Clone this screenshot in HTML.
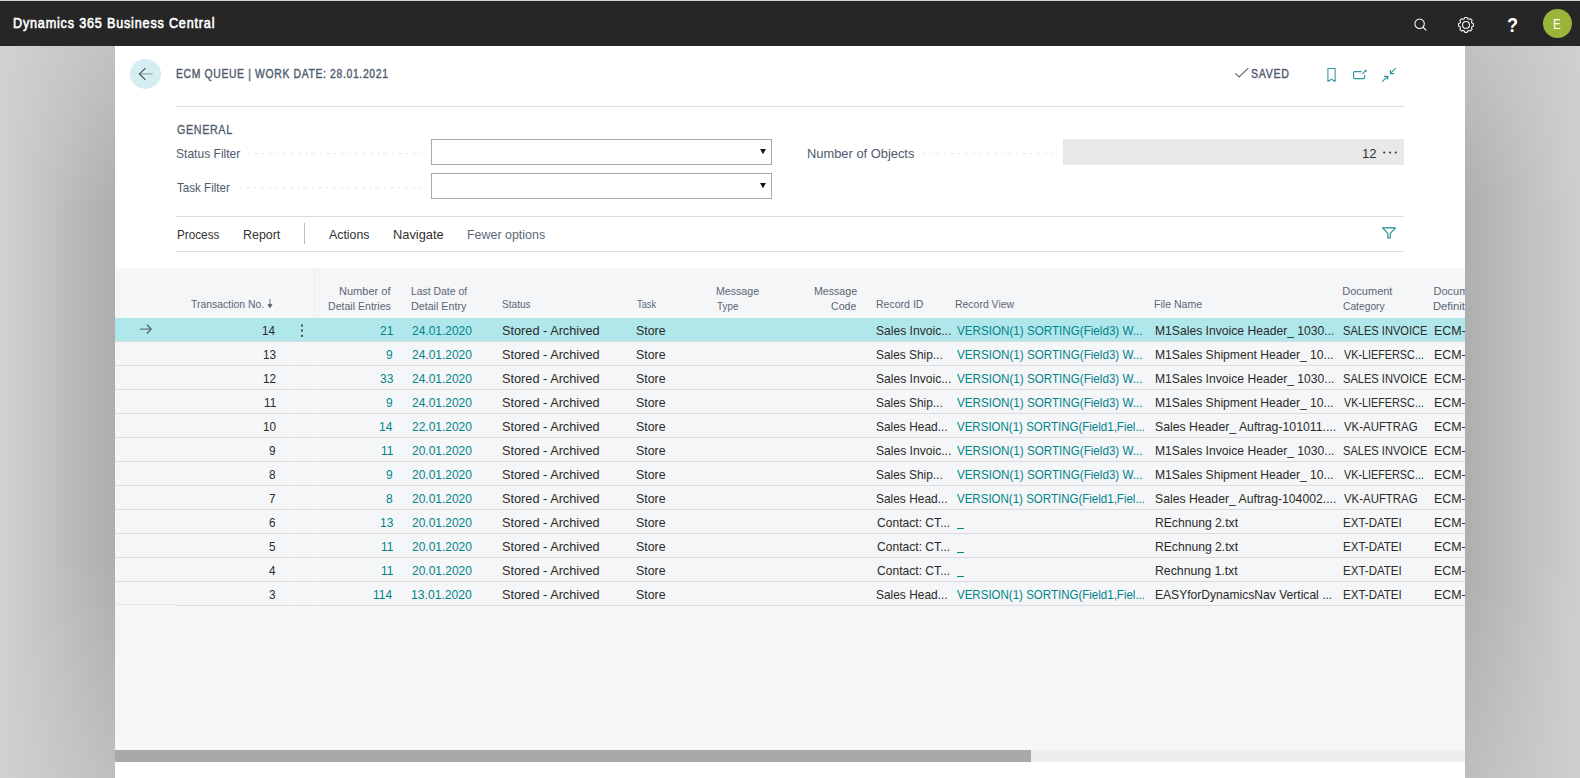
<!DOCTYPE html>
<html><head><meta charset="utf-8"><title>ECM Queue</title>
<style>html,body{margin:0;padding:0;width:1580px;height:778px;overflow:hidden;background:#fff;font-family:'Liberation Sans', sans-serif}</style>
</head><body>
<div style="position:relative;width:1580px;height:778px;overflow:hidden">
<div style='position:absolute;left:0px;top:0px;width:1580px;height:1px;background:#d4d4d4;'></div>
<div style='position:absolute;left:0px;top:1px;width:1580px;height:45px;background:#262626;'></div>
<div style='position:absolute;left:0px;top:46px;width:115px;height:732px;background:linear-gradient(to bottom,rgba(210,210,210,0.55) 0px,rgba(210,210,210,0) 160px,rgba(210,210,210,0) 520px,rgba(210,210,210,0.45) 732px),linear-gradient(to right,#d1d1d1,#aeaeae);'></div>
<div style='position:absolute;left:1465px;top:46px;width:115px;height:732px;background:linear-gradient(to bottom,rgba(208,208,208,0.55) 0px,rgba(208,208,208,0) 160px,rgba(208,208,208,0) 520px,rgba(208,208,208,0.45) 732px),linear-gradient(to right,#aeaeae,#cfcfcf);'></div>
<div style='position:absolute;left:115px;top:46px;width:1350px;height:732px;background:#ffffff;'></div>
<div style='position:absolute;left:1543px;top:9px;width:29px;height:29px;border-radius:50%;background:#9bb43a'></div>
<div style='position:absolute;left:130px;top:59px;width:31px;height:30px;border-radius:50%;background:#d6eef1'></div>
<div style='position:absolute;left:176px;top:106px;width:1228px;height:1px;background:#d9dde3;'></div>
<div style='position:absolute;left:431px;top:139px;width:339px;height:24px;border:1px solid #a8a8a8;background:#fff'></div>
<div style='position:absolute;left:431px;top:173px;width:339px;height:24px;border:1px solid #a8a8a8;background:#fff'></div>
<div style='position:absolute;left:1063px;top:139px;width:341px;height:26px;background:#e7e8ea;'></div>
<svg style='position:absolute;left:1382px;top:150px' width='16' height='5' viewBox='0 0 16 5'>
<circle cx='2.2' cy='2.5' r='1.05' fill='#323130'/><circle cx='8' cy='2.5' r='1.05' fill='#323130'/><circle cx='13.8' cy='2.5' r='1.05' fill='#323130'/></svg>
<div style='position:absolute;left:176px;top:216px;width:1228px;height:1px;background:#d9dde3;'></div>
<div style='position:absolute;left:176px;top:251px;width:1228px;height:1px;background:#d9dde3;'></div>
<div style='position:absolute;left:304px;top:223px;width:1px;height:21px;background:#b8bcc2;'></div>
<div style='position:absolute;left:115px;top:268px;width:1350px;height:482px;background:#f5f6f7;'></div>
<div style='position:absolute;left:314px;top:268px;width:1px;height:50px;background:#eeeff1;'></div>
<div style='position:absolute;left:115px;top:318px;width:1350px;height:23px;background:#b0e7ea;'></div>
<div style='position:absolute;left:115px;top:341px;width:174px;height:1px;background:#dadcdf;'></div>
<div style='position:absolute;left:290px;top:341px;width:24px;height:1px;background:#dadcdf;'></div>
<div style='position:absolute;left:315px;top:341px;width:1150px;height:1px;background:#dadcdf;'></div>
<div style='position:absolute;left:115px;top:365px;width:174px;height:1px;background:#dadcdf;'></div>
<div style='position:absolute;left:290px;top:365px;width:24px;height:1px;background:#dadcdf;'></div>
<div style='position:absolute;left:315px;top:365px;width:1150px;height:1px;background:#dadcdf;'></div>
<div style='position:absolute;left:115px;top:389px;width:174px;height:1px;background:#dadcdf;'></div>
<div style='position:absolute;left:290px;top:389px;width:24px;height:1px;background:#dadcdf;'></div>
<div style='position:absolute;left:315px;top:389px;width:1150px;height:1px;background:#dadcdf;'></div>
<div style='position:absolute;left:115px;top:413px;width:174px;height:1px;background:#dadcdf;'></div>
<div style='position:absolute;left:290px;top:413px;width:24px;height:1px;background:#dadcdf;'></div>
<div style='position:absolute;left:315px;top:413px;width:1150px;height:1px;background:#dadcdf;'></div>
<div style='position:absolute;left:115px;top:437px;width:174px;height:1px;background:#dadcdf;'></div>
<div style='position:absolute;left:290px;top:437px;width:24px;height:1px;background:#dadcdf;'></div>
<div style='position:absolute;left:315px;top:437px;width:1150px;height:1px;background:#dadcdf;'></div>
<div style='position:absolute;left:115px;top:461px;width:174px;height:1px;background:#dadcdf;'></div>
<div style='position:absolute;left:290px;top:461px;width:24px;height:1px;background:#dadcdf;'></div>
<div style='position:absolute;left:315px;top:461px;width:1150px;height:1px;background:#dadcdf;'></div>
<div style='position:absolute;left:115px;top:485px;width:174px;height:1px;background:#dadcdf;'></div>
<div style='position:absolute;left:290px;top:485px;width:24px;height:1px;background:#dadcdf;'></div>
<div style='position:absolute;left:315px;top:485px;width:1150px;height:1px;background:#dadcdf;'></div>
<div style='position:absolute;left:115px;top:509px;width:174px;height:1px;background:#dadcdf;'></div>
<div style='position:absolute;left:290px;top:509px;width:24px;height:1px;background:#dadcdf;'></div>
<div style='position:absolute;left:315px;top:509px;width:1150px;height:1px;background:#dadcdf;'></div>
<div style='position:absolute;left:115px;top:533px;width:174px;height:1px;background:#dadcdf;'></div>
<div style='position:absolute;left:290px;top:533px;width:24px;height:1px;background:#dadcdf;'></div>
<div style='position:absolute;left:315px;top:533px;width:1150px;height:1px;background:#dadcdf;'></div>
<div style='position:absolute;left:957px;top:528px;width:7px;height:1.2px;background:#00838c;'></div>
<div style='position:absolute;left:115px;top:557px;width:174px;height:1px;background:#dadcdf;'></div>
<div style='position:absolute;left:290px;top:557px;width:24px;height:1px;background:#dadcdf;'></div>
<div style='position:absolute;left:315px;top:557px;width:1150px;height:1px;background:#dadcdf;'></div>
<div style='position:absolute;left:957px;top:552px;width:7px;height:1.2px;background:#00838c;'></div>
<div style='position:absolute;left:115px;top:581px;width:174px;height:1px;background:#dadcdf;'></div>
<div style='position:absolute;left:290px;top:581px;width:24px;height:1px;background:#dadcdf;'></div>
<div style='position:absolute;left:315px;top:581px;width:1150px;height:1px;background:#dadcdf;'></div>
<div style='position:absolute;left:957px;top:576px;width:7px;height:1.2px;background:#00838c;'></div>
<div style='position:absolute;left:115px;top:604px;width:61px;height:1px;background:#e4e6e9;'></div>
<div style='position:absolute;left:176px;top:605px;width:113px;height:1px;background:#dadcdf;'></div>
<div style='position:absolute;left:290px;top:605px;width:24px;height:1px;background:#dadcdf;'></div>
<div style='position:absolute;left:315px;top:605px;width:1150px;height:1px;background:#dadcdf;'></div>
<div style='position:absolute;left:115px;top:750px;width:916px;height:12px;background:#a9a9a9;'></div>
<div style='position:absolute;left:1031px;top:750px;width:434px;height:12px;background:#eeeeee;'></div>
<span style="position:absolute;left:13.10px;top:16.15px;font-family:'Liberation Sans', sans-serif;font-size:14px;line-height:1;color:#ffffff;font-weight:normal;white-space:nowrap;transform-origin:0 0;transform:scaleX(0.9009);letter-spacing:0.9px;-webkit-text-stroke:0.6px #ffffff;">Dynamics 365 Business Central</span>
<span style="position:absolute;left:1507.10px;top:15.37px;font-family:'Liberation Sans', sans-serif;font-size:20px;line-height:1;color:#ffffff;font-weight:bold;white-space:nowrap;transform-origin:0 0;transform:scaleX(0.9000);">?</span>
<span style="position:absolute;left:1553.44px;top:15.88px;font-family:'Liberation Sans', sans-serif;font-size:15.5px;line-height:1;color:#ffffff;font-weight:normal;white-space:nowrap;transform-origin:0 0;transform:scaleX(0.7556);">E</span>
<span style="position:absolute;left:176.48px;top:68.33px;font-family:'Liberation Sans', sans-serif;font-size:12.6px;line-height:1;color:#4f5b6c;font-weight:normal;white-space:nowrap;transform-origin:0 0;transform:scaleX(0.8230);letter-spacing:0.8px;-webkit-text-stroke:0.4px #4f5b6c;">ECM QUEUE | WORK DATE: 28.01.2021</span>
<span style="position:absolute;left:1251.30px;top:68.33px;font-family:'Liberation Sans', sans-serif;font-size:12.6px;line-height:1;color:#4f5b6c;font-weight:normal;white-space:nowrap;transform-origin:0 0;transform:scaleX(0.8444);letter-spacing:0.8px;-webkit-text-stroke:0.4px #4f5b6c;">SAVED</span>
<span style="position:absolute;left:177.00px;top:123.84px;font-family:'Liberation Sans', sans-serif;font-size:12px;line-height:1;color:#4f5b6c;font-weight:normal;white-space:nowrap;transform-origin:0 0;transform:scaleX(0.8952);letter-spacing:0.7px;-webkit-text-stroke:0.3px #4f5b6c;">GENERAL</span>
<span style="position:absolute;left:176.07px;top:147.00px;font-family:'Liberation Sans', sans-serif;font-size:13px;line-height:1;color:#4f5b6c;font-weight:normal;white-space:nowrap;transform-origin:0 0;transform:scaleX(0.9275);">Status Filter</span>
<span style="position:absolute;left:177.00px;top:181.00px;font-family:'Liberation Sans', sans-serif;font-size:13px;line-height:1;color:#4f5b6c;font-weight:normal;white-space:nowrap;transform-origin:0 0;transform:scaleX(0.8917);">Task Filter</span>
<span style="position:absolute;left:807.01px;top:147.00px;font-family:'Liberation Sans', sans-serif;font-size:13px;line-height:1;color:#4f5b6c;font-weight:normal;white-space:nowrap;transform-origin:0 0;transform:scaleX(0.9907);">Number of Objects</span>
<span style="position:absolute;left:1362.00px;top:147.00px;font-family:'Liberation Sans', sans-serif;font-size:13px;line-height:1;color:#323130;font-weight:normal;white-space:nowrap;transform-origin:0 0;">12</span>
<span style="position:absolute;left:176.60px;top:227.60px;font-family:'Liberation Sans', sans-serif;font-size:13px;line-height:1;color:#323130;font-weight:normal;white-space:nowrap;transform-origin:0 0;transform:scaleX(0.9022);">Process</span>
<span style="position:absolute;left:243.04px;top:227.60px;font-family:'Liberation Sans', sans-serif;font-size:13px;line-height:1;color:#323130;font-weight:normal;white-space:nowrap;transform-origin:0 0;transform:scaleX(0.9553);">Report</span>
<span style="position:absolute;left:328.70px;top:227.60px;font-family:'Liberation Sans', sans-serif;font-size:13px;line-height:1;color:#323130;font-weight:normal;white-space:nowrap;transform-origin:0 0;transform:scaleX(0.9488);">Actions</span>
<span style="position:absolute;left:393.01px;top:227.60px;font-family:'Liberation Sans', sans-serif;font-size:13px;line-height:1;color:#323130;font-weight:normal;white-space:nowrap;transform-origin:0 0;transform:scaleX(0.9860);">Navigate</span>
<span style="position:absolute;left:467.24px;top:227.60px;font-family:'Liberation Sans', sans-serif;font-size:13px;line-height:1;color:#5a6778;font-weight:normal;white-space:nowrap;transform-origin:0 0;transform:scaleX(0.9568);">Fewer options</span>
<span style="position:absolute;left:190.80px;top:299.19px;font-family:'Liberation Sans', sans-serif;font-size:11px;line-height:1;color:#5a6676;font-weight:normal;white-space:nowrap;transform-origin:0 0;transform:scaleX(0.9481);">Transaction No.</span>
<span style="position:absolute;left:338.60px;top:285.69px;font-family:'Liberation Sans', sans-serif;font-size:11px;line-height:1;color:#5a6676;font-weight:normal;white-space:nowrap;transform-origin:0 0;transform:scaleX(1.0039);">Number of</span>
<span style="position:absolute;left:328.34px;top:300.69px;font-family:'Liberation Sans', sans-serif;font-size:11px;line-height:1;color:#5a6676;font-weight:normal;white-space:nowrap;transform-origin:0 0;transform:scaleX(0.9609);">Detail Entries</span>
<span style="position:absolute;left:410.75px;top:285.69px;font-family:'Liberation Sans', sans-serif;font-size:11px;line-height:1;color:#5a6676;font-weight:normal;white-space:nowrap;transform-origin:0 0;transform:scaleX(0.9458);">Last Date of</span>
<span style="position:absolute;left:410.73px;top:300.69px;font-family:'Liberation Sans', sans-serif;font-size:11px;line-height:1;color:#5a6676;font-weight:normal;white-space:nowrap;transform-origin:0 0;transform:scaleX(0.9732);">Detail Entry</span>
<span style="position:absolute;left:502.30px;top:299.19px;font-family:'Liberation Sans', sans-serif;font-size:11px;line-height:1;color:#5a6676;font-weight:normal;white-space:nowrap;transform-origin:0 0;transform:scaleX(0.9194);">Status</span>
<span style="position:absolute;left:636.50px;top:299.19px;font-family:'Liberation Sans', sans-serif;font-size:11px;line-height:1;color:#5a6676;font-weight:normal;white-space:nowrap;transform-origin:0 0;transform:scaleX(0.8478);">Task</span>
<span style="position:absolute;left:715.53px;top:285.69px;font-family:'Liberation Sans', sans-serif;font-size:11px;line-height:1;color:#5a6676;font-weight:normal;white-space:nowrap;transform-origin:0 0;transform:scaleX(0.9651);">Message</span>
<span style="position:absolute;left:716.50px;top:300.69px;font-family:'Liberation Sans', sans-serif;font-size:11px;line-height:1;color:#5a6676;font-weight:normal;white-space:nowrap;transform-origin:0 0;transform:scaleX(0.8958);">Type</span>
<span style="position:absolute;left:813.53px;top:285.69px;font-family:'Liberation Sans', sans-serif;font-size:11px;line-height:1;color:#5a6676;font-weight:normal;white-space:nowrap;transform-origin:0 0;transform:scaleX(0.9651);">Message</span>
<span style="position:absolute;left:831.00px;top:300.69px;font-family:'Liberation Sans', sans-serif;font-size:11px;line-height:1;color:#5a6676;font-weight:normal;white-space:nowrap;transform-origin:0 0;transform:scaleX(0.9615);">Code</span>
<span style="position:absolute;left:875.64px;top:299.19px;font-family:'Liberation Sans', sans-serif;font-size:11px;line-height:1;color:#5a6676;font-weight:normal;white-space:nowrap;transform-origin:0 0;transform:scaleX(0.9583);">Record ID</span>
<span style="position:absolute;left:955.45px;top:299.19px;font-family:'Liberation Sans', sans-serif;font-size:11px;line-height:1;color:#5a6676;font-weight:normal;white-space:nowrap;transform-origin:0 0;transform:scaleX(0.9508);">Record View</span>
<span style="position:absolute;left:1154.34px;top:299.19px;font-family:'Liberation Sans', sans-serif;font-size:11px;line-height:1;color:#5a6676;font-weight:normal;white-space:nowrap;transform-origin:0 0;transform:scaleX(0.9592);">File Name</span>
<span style="position:absolute;left:1342.30px;top:285.69px;font-family:'Liberation Sans', sans-serif;font-size:11px;line-height:1;color:#5a6676;font-weight:normal;white-space:nowrap;transform-origin:0 0;">Document</span>
<span style="position:absolute;left:1343.30px;top:300.69px;font-family:'Liberation Sans', sans-serif;font-size:11px;line-height:1;color:#5a6676;font-weight:normal;white-space:nowrap;transform-origin:0 0;transform:scaleX(0.9333);">Category</span>
<div style='position:absolute;left:0;top:0;width:1465px;height:778px;overflow:hidden'><span style="position:absolute;left:1433.50px;top:285.69px;font-family:'Liberation Sans', sans-serif;font-size:11px;line-height:1;color:#5a6676;font-weight:normal;white-space:nowrap;transform-origin:0 0;">Document</span></div>
<div style='position:absolute;left:0;top:0;width:1465px;height:778px;overflow:hidden'><span style="position:absolute;left:1433.48px;top:300.69px;font-family:'Liberation Sans', sans-serif;font-size:11px;line-height:1;color:#5a6676;font-weight:normal;white-space:nowrap;transform-origin:0 0;transform:scaleX(1.0222);">Definition</span></div>
<span style="position:absolute;left:262.00px;top:324.00px;font-family:'Liberation Sans', sans-serif;font-size:13px;line-height:1;color:#2a2a2a;font-weight:normal;white-space:nowrap;transform-origin:0 0;transform:scaleX(0.9000);">14</span>
<span style="position:absolute;left:379.72px;top:324.00px;font-family:'Liberation Sans', sans-serif;font-size:13px;line-height:1;color:#00838c;font-weight:normal;white-space:nowrap;transform-origin:0 0;transform:scaleX(0.9200);">21</span>
<span style="position:absolute;left:411.50px;top:324.00px;font-family:'Liberation Sans', sans-serif;font-size:13px;line-height:1;color:#00838c;font-weight:normal;white-space:nowrap;transform-origin:0 0;transform:scaleX(0.9200);">24.01.2020</span>
<span style="position:absolute;left:502.02px;top:324.00px;font-family:'Liberation Sans', sans-serif;font-size:13px;line-height:1;color:#2a2a2a;font-weight:normal;white-space:nowrap;transform-origin:0 0;transform:scaleX(0.9796);">Stored - Archived</span>
<span style="position:absolute;left:635.55px;top:324.00px;font-family:'Liberation Sans', sans-serif;font-size:13px;line-height:1;color:#2a2a2a;font-weight:normal;white-space:nowrap;transform-origin:0 0;transform:scaleX(0.9500);">Store</span>
<span style="position:absolute;left:875.77px;top:324.00px;font-family:'Liberation Sans', sans-serif;font-size:13px;line-height:1;color:#2a2a2a;font-weight:normal;white-space:nowrap;transform-origin:0 0;transform:scaleX(0.9304);">Sales Invoic...</span>
<span style="position:absolute;left:956.80px;top:324.00px;font-family:'Liberation Sans', sans-serif;font-size:13px;line-height:1;color:#00838c;font-weight:normal;white-space:nowrap;transform-origin:0 0;transform:scaleX(0.8961);">VERSION(1) SORTING(Field3) W...</span>
<span style="position:absolute;left:1155.17px;top:324.00px;font-family:'Liberation Sans', sans-serif;font-size:13px;line-height:1;color:#2a2a2a;font-weight:normal;white-space:nowrap;transform-origin:0 0;transform:scaleX(0.9332);">M1Sales Invoice Header_ 1030...</span>
<span style="position:absolute;left:1343.05px;top:324.00px;font-family:'Liberation Sans', sans-serif;font-size:13px;line-height:1;color:#2a2a2a;font-weight:normal;white-space:nowrap;transform-origin:0 0;transform:scaleX(0.8531);">SALES INVOICE</span>
<div style='position:absolute;left:0;top:0;width:1465px;height:778px;overflow:hidden'><span style="position:absolute;left:1434.05px;top:324.00px;font-family:'Liberation Sans', sans-serif;font-size:13px;line-height:1;color:#2a2a2a;font-weight:normal;white-space:nowrap;transform-origin:0 0;transform:scaleX(0.9531);">ECM-</span></div>
<span style="position:absolute;left:262.90px;top:348.00px;font-family:'Liberation Sans', sans-serif;font-size:13px;line-height:1;color:#2a2a2a;font-weight:normal;white-space:nowrap;transform-origin:0 0;transform:scaleX(0.9000);">13</span>
<span style="position:absolute;left:386.16px;top:348.00px;font-family:'Liberation Sans', sans-serif;font-size:13px;line-height:1;color:#00838c;font-weight:normal;white-space:nowrap;transform-origin:0 0;transform:scaleX(0.9200);">9</span>
<span style="position:absolute;left:411.50px;top:348.00px;font-family:'Liberation Sans', sans-serif;font-size:13px;line-height:1;color:#00838c;font-weight:normal;white-space:nowrap;transform-origin:0 0;transform:scaleX(0.9200);">24.01.2020</span>
<span style="position:absolute;left:502.02px;top:348.00px;font-family:'Liberation Sans', sans-serif;font-size:13px;line-height:1;color:#2a2a2a;font-weight:normal;white-space:nowrap;transform-origin:0 0;transform:scaleX(0.9796);">Stored - Archived</span>
<span style="position:absolute;left:635.55px;top:348.00px;font-family:'Liberation Sans', sans-serif;font-size:13px;line-height:1;color:#2a2a2a;font-weight:normal;white-space:nowrap;transform-origin:0 0;transform:scaleX(0.9500);">Store</span>
<span style="position:absolute;left:875.79px;top:348.00px;font-family:'Liberation Sans', sans-serif;font-size:13px;line-height:1;color:#2a2a2a;font-weight:normal;white-space:nowrap;transform-origin:0 0;transform:scaleX(0.9141);">Sales Ship...</span>
<span style="position:absolute;left:956.80px;top:348.00px;font-family:'Liberation Sans', sans-serif;font-size:13px;line-height:1;color:#00838c;font-weight:normal;white-space:nowrap;transform-origin:0 0;transform:scaleX(0.8961);">VERSION(1) SORTING(Field3) W...</span>
<span style="position:absolute;left:1155.17px;top:348.00px;font-family:'Liberation Sans', sans-serif;font-size:13px;line-height:1;color:#2a2a2a;font-weight:normal;white-space:nowrap;transform-origin:0 0;transform:scaleX(0.9332);">M1Sales Shipment Header_ 10...</span>
<span style="position:absolute;left:1343.90px;top:348.00px;font-family:'Liberation Sans', sans-serif;font-size:13px;line-height:1;color:#2a2a2a;font-weight:normal;white-space:nowrap;transform-origin:0 0;transform:scaleX(0.8316);">VK-LIEFERSC...</span>
<div style='position:absolute;left:0;top:0;width:1465px;height:778px;overflow:hidden'><span style="position:absolute;left:1434.05px;top:348.00px;font-family:'Liberation Sans', sans-serif;font-size:13px;line-height:1;color:#2a2a2a;font-weight:normal;white-space:nowrap;transform-origin:0 0;transform:scaleX(0.9531);">ECM-</span></div>
<span style="position:absolute;left:262.90px;top:372.00px;font-family:'Liberation Sans', sans-serif;font-size:13px;line-height:1;color:#2a2a2a;font-weight:normal;white-space:nowrap;transform-origin:0 0;transform:scaleX(0.9000);">12</span>
<span style="position:absolute;left:379.72px;top:372.00px;font-family:'Liberation Sans', sans-serif;font-size:13px;line-height:1;color:#00838c;font-weight:normal;white-space:nowrap;transform-origin:0 0;transform:scaleX(0.9200);">33</span>
<span style="position:absolute;left:411.50px;top:372.00px;font-family:'Liberation Sans', sans-serif;font-size:13px;line-height:1;color:#00838c;font-weight:normal;white-space:nowrap;transform-origin:0 0;transform:scaleX(0.9200);">24.01.2020</span>
<span style="position:absolute;left:502.02px;top:372.00px;font-family:'Liberation Sans', sans-serif;font-size:13px;line-height:1;color:#2a2a2a;font-weight:normal;white-space:nowrap;transform-origin:0 0;transform:scaleX(0.9796);">Stored - Archived</span>
<span style="position:absolute;left:635.55px;top:372.00px;font-family:'Liberation Sans', sans-serif;font-size:13px;line-height:1;color:#2a2a2a;font-weight:normal;white-space:nowrap;transform-origin:0 0;transform:scaleX(0.9500);">Store</span>
<span style="position:absolute;left:875.77px;top:372.00px;font-family:'Liberation Sans', sans-serif;font-size:13px;line-height:1;color:#2a2a2a;font-weight:normal;white-space:nowrap;transform-origin:0 0;transform:scaleX(0.9304);">Sales Invoic...</span>
<span style="position:absolute;left:956.80px;top:372.00px;font-family:'Liberation Sans', sans-serif;font-size:13px;line-height:1;color:#00838c;font-weight:normal;white-space:nowrap;transform-origin:0 0;transform:scaleX(0.8961);">VERSION(1) SORTING(Field3) W...</span>
<span style="position:absolute;left:1155.17px;top:372.00px;font-family:'Liberation Sans', sans-serif;font-size:13px;line-height:1;color:#2a2a2a;font-weight:normal;white-space:nowrap;transform-origin:0 0;transform:scaleX(0.9332);">M1Sales Invoice Header_ 1030...</span>
<span style="position:absolute;left:1343.05px;top:372.00px;font-family:'Liberation Sans', sans-serif;font-size:13px;line-height:1;color:#2a2a2a;font-weight:normal;white-space:nowrap;transform-origin:0 0;transform:scaleX(0.8531);">SALES INVOICE</span>
<div style='position:absolute;left:0;top:0;width:1465px;height:778px;overflow:hidden'><span style="position:absolute;left:1434.05px;top:372.00px;font-family:'Liberation Sans', sans-serif;font-size:13px;line-height:1;color:#2a2a2a;font-weight:normal;white-space:nowrap;transform-origin:0 0;transform:scaleX(0.9531);">ECM-</span></div>
<span style="position:absolute;left:263.80px;top:396.00px;font-family:'Liberation Sans', sans-serif;font-size:13px;line-height:1;color:#2a2a2a;font-weight:normal;white-space:nowrap;transform-origin:0 0;transform:scaleX(0.9000);">11</span>
<span style="position:absolute;left:386.16px;top:396.00px;font-family:'Liberation Sans', sans-serif;font-size:13px;line-height:1;color:#00838c;font-weight:normal;white-space:nowrap;transform-origin:0 0;transform:scaleX(0.9200);">9</span>
<span style="position:absolute;left:411.50px;top:396.00px;font-family:'Liberation Sans', sans-serif;font-size:13px;line-height:1;color:#00838c;font-weight:normal;white-space:nowrap;transform-origin:0 0;transform:scaleX(0.9200);">24.01.2020</span>
<span style="position:absolute;left:502.02px;top:396.00px;font-family:'Liberation Sans', sans-serif;font-size:13px;line-height:1;color:#2a2a2a;font-weight:normal;white-space:nowrap;transform-origin:0 0;transform:scaleX(0.9796);">Stored - Archived</span>
<span style="position:absolute;left:635.55px;top:396.00px;font-family:'Liberation Sans', sans-serif;font-size:13px;line-height:1;color:#2a2a2a;font-weight:normal;white-space:nowrap;transform-origin:0 0;transform:scaleX(0.9500);">Store</span>
<span style="position:absolute;left:875.79px;top:396.00px;font-family:'Liberation Sans', sans-serif;font-size:13px;line-height:1;color:#2a2a2a;font-weight:normal;white-space:nowrap;transform-origin:0 0;transform:scaleX(0.9141);">Sales Ship...</span>
<span style="position:absolute;left:956.80px;top:396.00px;font-family:'Liberation Sans', sans-serif;font-size:13px;line-height:1;color:#00838c;font-weight:normal;white-space:nowrap;transform-origin:0 0;transform:scaleX(0.8961);">VERSION(1) SORTING(Field3) W...</span>
<span style="position:absolute;left:1155.17px;top:396.00px;font-family:'Liberation Sans', sans-serif;font-size:13px;line-height:1;color:#2a2a2a;font-weight:normal;white-space:nowrap;transform-origin:0 0;transform:scaleX(0.9332);">M1Sales Shipment Header_ 10...</span>
<span style="position:absolute;left:1343.90px;top:396.00px;font-family:'Liberation Sans', sans-serif;font-size:13px;line-height:1;color:#2a2a2a;font-weight:normal;white-space:nowrap;transform-origin:0 0;transform:scaleX(0.8316);">VK-LIEFERSC...</span>
<div style='position:absolute;left:0;top:0;width:1465px;height:778px;overflow:hidden'><span style="position:absolute;left:1434.05px;top:396.00px;font-family:'Liberation Sans', sans-serif;font-size:13px;line-height:1;color:#2a2a2a;font-weight:normal;white-space:nowrap;transform-origin:0 0;transform:scaleX(0.9531);">ECM-</span></div>
<span style="position:absolute;left:262.90px;top:420.00px;font-family:'Liberation Sans', sans-serif;font-size:13px;line-height:1;color:#2a2a2a;font-weight:normal;white-space:nowrap;transform-origin:0 0;transform:scaleX(0.9000);">10</span>
<span style="position:absolute;left:378.80px;top:420.00px;font-family:'Liberation Sans', sans-serif;font-size:13px;line-height:1;color:#00838c;font-weight:normal;white-space:nowrap;transform-origin:0 0;transform:scaleX(0.9200);">14</span>
<span style="position:absolute;left:411.50px;top:420.00px;font-family:'Liberation Sans', sans-serif;font-size:13px;line-height:1;color:#00838c;font-weight:normal;white-space:nowrap;transform-origin:0 0;transform:scaleX(0.9200);">22.01.2020</span>
<span style="position:absolute;left:502.02px;top:420.00px;font-family:'Liberation Sans', sans-serif;font-size:13px;line-height:1;color:#2a2a2a;font-weight:normal;white-space:nowrap;transform-origin:0 0;transform:scaleX(0.9796);">Stored - Archived</span>
<span style="position:absolute;left:635.55px;top:420.00px;font-family:'Liberation Sans', sans-serif;font-size:13px;line-height:1;color:#2a2a2a;font-weight:normal;white-space:nowrap;transform-origin:0 0;transform:scaleX(0.9500);">Store</span>
<span style="position:absolute;left:875.78px;top:420.00px;font-family:'Liberation Sans', sans-serif;font-size:13px;line-height:1;color:#2a2a2a;font-weight:normal;white-space:nowrap;transform-origin:0 0;transform:scaleX(0.9171);">Sales Head...</span>
<span style="position:absolute;left:956.80px;top:420.00px;font-family:'Liberation Sans', sans-serif;font-size:13px;line-height:1;color:#00838c;font-weight:normal;white-space:nowrap;transform-origin:0 0;transform:scaleX(0.8863);">VERSION(1) SORTING(Field1,Fiel...</span>
<span style="position:absolute;left:1155.16px;top:420.00px;font-family:'Liberation Sans', sans-serif;font-size:13px;line-height:1;color:#2a2a2a;font-weight:normal;white-space:nowrap;transform-origin:0 0;transform:scaleX(0.9437);">Sales Header_ Auftrag-101011....</span>
<span style="position:absolute;left:1343.90px;top:420.00px;font-family:'Liberation Sans', sans-serif;font-size:13px;line-height:1;color:#2a2a2a;font-weight:normal;white-space:nowrap;transform-origin:0 0;transform:scaleX(0.8783);">VK-AUFTRAG</span>
<div style='position:absolute;left:0;top:0;width:1465px;height:778px;overflow:hidden'><span style="position:absolute;left:1434.05px;top:420.00px;font-family:'Liberation Sans', sans-serif;font-size:13px;line-height:1;color:#2a2a2a;font-weight:normal;white-space:nowrap;transform-origin:0 0;transform:scaleX(0.9531);">ECM-</span></div>
<span style="position:absolute;left:269.20px;top:444.00px;font-family:'Liberation Sans', sans-serif;font-size:13px;line-height:1;color:#2a2a2a;font-weight:normal;white-space:nowrap;transform-origin:0 0;transform:scaleX(0.9000);">9</span>
<span style="position:absolute;left:380.64px;top:444.00px;font-family:'Liberation Sans', sans-serif;font-size:13px;line-height:1;color:#00838c;font-weight:normal;white-space:nowrap;transform-origin:0 0;transform:scaleX(0.9200);">11</span>
<span style="position:absolute;left:411.50px;top:444.00px;font-family:'Liberation Sans', sans-serif;font-size:13px;line-height:1;color:#00838c;font-weight:normal;white-space:nowrap;transform-origin:0 0;transform:scaleX(0.9200);">20.01.2020</span>
<span style="position:absolute;left:502.02px;top:444.00px;font-family:'Liberation Sans', sans-serif;font-size:13px;line-height:1;color:#2a2a2a;font-weight:normal;white-space:nowrap;transform-origin:0 0;transform:scaleX(0.9796);">Stored - Archived</span>
<span style="position:absolute;left:635.55px;top:444.00px;font-family:'Liberation Sans', sans-serif;font-size:13px;line-height:1;color:#2a2a2a;font-weight:normal;white-space:nowrap;transform-origin:0 0;transform:scaleX(0.9500);">Store</span>
<span style="position:absolute;left:875.77px;top:444.00px;font-family:'Liberation Sans', sans-serif;font-size:13px;line-height:1;color:#2a2a2a;font-weight:normal;white-space:nowrap;transform-origin:0 0;transform:scaleX(0.9304);">Sales Invoic...</span>
<span style="position:absolute;left:956.80px;top:444.00px;font-family:'Liberation Sans', sans-serif;font-size:13px;line-height:1;color:#00838c;font-weight:normal;white-space:nowrap;transform-origin:0 0;transform:scaleX(0.8961);">VERSION(1) SORTING(Field3) W...</span>
<span style="position:absolute;left:1155.17px;top:444.00px;font-family:'Liberation Sans', sans-serif;font-size:13px;line-height:1;color:#2a2a2a;font-weight:normal;white-space:nowrap;transform-origin:0 0;transform:scaleX(0.9332);">M1Sales Invoice Header_ 1030...</span>
<span style="position:absolute;left:1343.05px;top:444.00px;font-family:'Liberation Sans', sans-serif;font-size:13px;line-height:1;color:#2a2a2a;font-weight:normal;white-space:nowrap;transform-origin:0 0;transform:scaleX(0.8531);">SALES INVOICE</span>
<div style='position:absolute;left:0;top:0;width:1465px;height:778px;overflow:hidden'><span style="position:absolute;left:1434.05px;top:444.00px;font-family:'Liberation Sans', sans-serif;font-size:13px;line-height:1;color:#2a2a2a;font-weight:normal;white-space:nowrap;transform-origin:0 0;transform:scaleX(0.9531);">ECM-</span></div>
<span style="position:absolute;left:269.20px;top:468.00px;font-family:'Liberation Sans', sans-serif;font-size:13px;line-height:1;color:#2a2a2a;font-weight:normal;white-space:nowrap;transform-origin:0 0;transform:scaleX(0.9000);">8</span>
<span style="position:absolute;left:386.16px;top:468.00px;font-family:'Liberation Sans', sans-serif;font-size:13px;line-height:1;color:#00838c;font-weight:normal;white-space:nowrap;transform-origin:0 0;transform:scaleX(0.9200);">9</span>
<span style="position:absolute;left:411.50px;top:468.00px;font-family:'Liberation Sans', sans-serif;font-size:13px;line-height:1;color:#00838c;font-weight:normal;white-space:nowrap;transform-origin:0 0;transform:scaleX(0.9200);">20.01.2020</span>
<span style="position:absolute;left:502.02px;top:468.00px;font-family:'Liberation Sans', sans-serif;font-size:13px;line-height:1;color:#2a2a2a;font-weight:normal;white-space:nowrap;transform-origin:0 0;transform:scaleX(0.9796);">Stored - Archived</span>
<span style="position:absolute;left:635.55px;top:468.00px;font-family:'Liberation Sans', sans-serif;font-size:13px;line-height:1;color:#2a2a2a;font-weight:normal;white-space:nowrap;transform-origin:0 0;transform:scaleX(0.9500);">Store</span>
<span style="position:absolute;left:875.79px;top:468.00px;font-family:'Liberation Sans', sans-serif;font-size:13px;line-height:1;color:#2a2a2a;font-weight:normal;white-space:nowrap;transform-origin:0 0;transform:scaleX(0.9141);">Sales Ship...</span>
<span style="position:absolute;left:956.80px;top:468.00px;font-family:'Liberation Sans', sans-serif;font-size:13px;line-height:1;color:#00838c;font-weight:normal;white-space:nowrap;transform-origin:0 0;transform:scaleX(0.8961);">VERSION(1) SORTING(Field3) W...</span>
<span style="position:absolute;left:1155.17px;top:468.00px;font-family:'Liberation Sans', sans-serif;font-size:13px;line-height:1;color:#2a2a2a;font-weight:normal;white-space:nowrap;transform-origin:0 0;transform:scaleX(0.9332);">M1Sales Shipment Header_ 10...</span>
<span style="position:absolute;left:1343.90px;top:468.00px;font-family:'Liberation Sans', sans-serif;font-size:13px;line-height:1;color:#2a2a2a;font-weight:normal;white-space:nowrap;transform-origin:0 0;transform:scaleX(0.8316);">VK-LIEFERSC...</span>
<div style='position:absolute;left:0;top:0;width:1465px;height:778px;overflow:hidden'><span style="position:absolute;left:1434.05px;top:468.00px;font-family:'Liberation Sans', sans-serif;font-size:13px;line-height:1;color:#2a2a2a;font-weight:normal;white-space:nowrap;transform-origin:0 0;transform:scaleX(0.9531);">ECM-</span></div>
<span style="position:absolute;left:269.20px;top:492.00px;font-family:'Liberation Sans', sans-serif;font-size:13px;line-height:1;color:#2a2a2a;font-weight:normal;white-space:nowrap;transform-origin:0 0;transform:scaleX(0.9000);">7</span>
<span style="position:absolute;left:386.16px;top:492.00px;font-family:'Liberation Sans', sans-serif;font-size:13px;line-height:1;color:#00838c;font-weight:normal;white-space:nowrap;transform-origin:0 0;transform:scaleX(0.9200);">8</span>
<span style="position:absolute;left:411.50px;top:492.00px;font-family:'Liberation Sans', sans-serif;font-size:13px;line-height:1;color:#00838c;font-weight:normal;white-space:nowrap;transform-origin:0 0;transform:scaleX(0.9200);">20.01.2020</span>
<span style="position:absolute;left:502.02px;top:492.00px;font-family:'Liberation Sans', sans-serif;font-size:13px;line-height:1;color:#2a2a2a;font-weight:normal;white-space:nowrap;transform-origin:0 0;transform:scaleX(0.9796);">Stored - Archived</span>
<span style="position:absolute;left:635.55px;top:492.00px;font-family:'Liberation Sans', sans-serif;font-size:13px;line-height:1;color:#2a2a2a;font-weight:normal;white-space:nowrap;transform-origin:0 0;transform:scaleX(0.9500);">Store</span>
<span style="position:absolute;left:875.78px;top:492.00px;font-family:'Liberation Sans', sans-serif;font-size:13px;line-height:1;color:#2a2a2a;font-weight:normal;white-space:nowrap;transform-origin:0 0;transform:scaleX(0.9171);">Sales Head...</span>
<span style="position:absolute;left:956.80px;top:492.00px;font-family:'Liberation Sans', sans-serif;font-size:13px;line-height:1;color:#00838c;font-weight:normal;white-space:nowrap;transform-origin:0 0;transform:scaleX(0.8863);">VERSION(1) SORTING(Field1,Fiel...</span>
<span style="position:absolute;left:1155.16px;top:492.00px;font-family:'Liberation Sans', sans-serif;font-size:13px;line-height:1;color:#2a2a2a;font-weight:normal;white-space:nowrap;transform-origin:0 0;transform:scaleX(0.9398);">Sales Header_ Auftrag-104002....</span>
<span style="position:absolute;left:1343.90px;top:492.00px;font-family:'Liberation Sans', sans-serif;font-size:13px;line-height:1;color:#2a2a2a;font-weight:normal;white-space:nowrap;transform-origin:0 0;transform:scaleX(0.8783);">VK-AUFTRAG</span>
<div style='position:absolute;left:0;top:0;width:1465px;height:778px;overflow:hidden'><span style="position:absolute;left:1434.05px;top:492.00px;font-family:'Liberation Sans', sans-serif;font-size:13px;line-height:1;color:#2a2a2a;font-weight:normal;white-space:nowrap;transform-origin:0 0;transform:scaleX(0.9531);">ECM-</span></div>
<span style="position:absolute;left:269.20px;top:516.00px;font-family:'Liberation Sans', sans-serif;font-size:13px;line-height:1;color:#2a2a2a;font-weight:normal;white-space:nowrap;transform-origin:0 0;transform:scaleX(0.9000);">6</span>
<span style="position:absolute;left:379.72px;top:516.00px;font-family:'Liberation Sans', sans-serif;font-size:13px;line-height:1;color:#00838c;font-weight:normal;white-space:nowrap;transform-origin:0 0;transform:scaleX(0.9200);">13</span>
<span style="position:absolute;left:411.50px;top:516.00px;font-family:'Liberation Sans', sans-serif;font-size:13px;line-height:1;color:#00838c;font-weight:normal;white-space:nowrap;transform-origin:0 0;transform:scaleX(0.9200);">20.01.2020</span>
<span style="position:absolute;left:502.02px;top:516.00px;font-family:'Liberation Sans', sans-serif;font-size:13px;line-height:1;color:#2a2a2a;font-weight:normal;white-space:nowrap;transform-origin:0 0;transform:scaleX(0.9796);">Stored - Archived</span>
<span style="position:absolute;left:635.55px;top:516.00px;font-family:'Liberation Sans', sans-serif;font-size:13px;line-height:1;color:#2a2a2a;font-weight:normal;white-space:nowrap;transform-origin:0 0;transform:scaleX(0.9500);">Store</span>
<span style="position:absolute;left:876.70px;top:516.00px;font-family:'Liberation Sans', sans-serif;font-size:13px;line-height:1;color:#2a2a2a;font-weight:normal;white-space:nowrap;transform-origin:0 0;transform:scaleX(0.9295);">Contact: CT...</span>
<span style="position:absolute;left:1155.17px;top:516.00px;font-family:'Liberation Sans', sans-serif;font-size:13px;line-height:1;color:#2a2a2a;font-weight:normal;white-space:nowrap;transform-origin:0 0;transform:scaleX(0.9341);">REchnung 2.txt</span>
<span style="position:absolute;left:1343.01px;top:516.00px;font-family:'Liberation Sans', sans-serif;font-size:13px;line-height:1;color:#2a2a2a;font-weight:normal;white-space:nowrap;transform-origin:0 0;transform:scaleX(0.8875);">EXT-DATEI</span>
<div style='position:absolute;left:0;top:0;width:1465px;height:778px;overflow:hidden'><span style="position:absolute;left:1434.05px;top:516.00px;font-family:'Liberation Sans', sans-serif;font-size:13px;line-height:1;color:#2a2a2a;font-weight:normal;white-space:nowrap;transform-origin:0 0;transform:scaleX(0.9531);">ECM-</span></div>
<span style="position:absolute;left:269.20px;top:540.00px;font-family:'Liberation Sans', sans-serif;font-size:13px;line-height:1;color:#2a2a2a;font-weight:normal;white-space:nowrap;transform-origin:0 0;transform:scaleX(0.9000);">5</span>
<span style="position:absolute;left:380.64px;top:540.00px;font-family:'Liberation Sans', sans-serif;font-size:13px;line-height:1;color:#00838c;font-weight:normal;white-space:nowrap;transform-origin:0 0;transform:scaleX(0.9200);">11</span>
<span style="position:absolute;left:411.50px;top:540.00px;font-family:'Liberation Sans', sans-serif;font-size:13px;line-height:1;color:#00838c;font-weight:normal;white-space:nowrap;transform-origin:0 0;transform:scaleX(0.9200);">20.01.2020</span>
<span style="position:absolute;left:502.02px;top:540.00px;font-family:'Liberation Sans', sans-serif;font-size:13px;line-height:1;color:#2a2a2a;font-weight:normal;white-space:nowrap;transform-origin:0 0;transform:scaleX(0.9796);">Stored - Archived</span>
<span style="position:absolute;left:635.55px;top:540.00px;font-family:'Liberation Sans', sans-serif;font-size:13px;line-height:1;color:#2a2a2a;font-weight:normal;white-space:nowrap;transform-origin:0 0;transform:scaleX(0.9500);">Store</span>
<span style="position:absolute;left:876.70px;top:540.00px;font-family:'Liberation Sans', sans-serif;font-size:13px;line-height:1;color:#2a2a2a;font-weight:normal;white-space:nowrap;transform-origin:0 0;transform:scaleX(0.9295);">Contact: CT...</span>
<span style="position:absolute;left:1155.17px;top:540.00px;font-family:'Liberation Sans', sans-serif;font-size:13px;line-height:1;color:#2a2a2a;font-weight:normal;white-space:nowrap;transform-origin:0 0;transform:scaleX(0.9341);">REchnung 2.txt</span>
<span style="position:absolute;left:1343.01px;top:540.00px;font-family:'Liberation Sans', sans-serif;font-size:13px;line-height:1;color:#2a2a2a;font-weight:normal;white-space:nowrap;transform-origin:0 0;transform:scaleX(0.8875);">EXT-DATEI</span>
<div style='position:absolute;left:0;top:0;width:1465px;height:778px;overflow:hidden'><span style="position:absolute;left:1434.05px;top:540.00px;font-family:'Liberation Sans', sans-serif;font-size:13px;line-height:1;color:#2a2a2a;font-weight:normal;white-space:nowrap;transform-origin:0 0;transform:scaleX(0.9531);">ECM-</span></div>
<span style="position:absolute;left:269.20px;top:564.00px;font-family:'Liberation Sans', sans-serif;font-size:13px;line-height:1;color:#2a2a2a;font-weight:normal;white-space:nowrap;transform-origin:0 0;transform:scaleX(0.9000);">4</span>
<span style="position:absolute;left:380.64px;top:564.00px;font-family:'Liberation Sans', sans-serif;font-size:13px;line-height:1;color:#00838c;font-weight:normal;white-space:nowrap;transform-origin:0 0;transform:scaleX(0.9200);">11</span>
<span style="position:absolute;left:411.50px;top:564.00px;font-family:'Liberation Sans', sans-serif;font-size:13px;line-height:1;color:#00838c;font-weight:normal;white-space:nowrap;transform-origin:0 0;transform:scaleX(0.9200);">20.01.2020</span>
<span style="position:absolute;left:502.02px;top:564.00px;font-family:'Liberation Sans', sans-serif;font-size:13px;line-height:1;color:#2a2a2a;font-weight:normal;white-space:nowrap;transform-origin:0 0;transform:scaleX(0.9796);">Stored - Archived</span>
<span style="position:absolute;left:635.55px;top:564.00px;font-family:'Liberation Sans', sans-serif;font-size:13px;line-height:1;color:#2a2a2a;font-weight:normal;white-space:nowrap;transform-origin:0 0;transform:scaleX(0.9500);">Store</span>
<span style="position:absolute;left:876.70px;top:564.00px;font-family:'Liberation Sans', sans-serif;font-size:13px;line-height:1;color:#2a2a2a;font-weight:normal;white-space:nowrap;transform-origin:0 0;transform:scaleX(0.9295);">Contact: CT...</span>
<span style="position:absolute;left:1155.16px;top:564.00px;font-family:'Liberation Sans', sans-serif;font-size:13px;line-height:1;color:#2a2a2a;font-weight:normal;white-space:nowrap;transform-origin:0 0;transform:scaleX(0.9448);">Rechnung 1.txt</span>
<span style="position:absolute;left:1343.01px;top:564.00px;font-family:'Liberation Sans', sans-serif;font-size:13px;line-height:1;color:#2a2a2a;font-weight:normal;white-space:nowrap;transform-origin:0 0;transform:scaleX(0.8875);">EXT-DATEI</span>
<div style='position:absolute;left:0;top:0;width:1465px;height:778px;overflow:hidden'><span style="position:absolute;left:1434.05px;top:564.00px;font-family:'Liberation Sans', sans-serif;font-size:13px;line-height:1;color:#2a2a2a;font-weight:normal;white-space:nowrap;transform-origin:0 0;transform:scaleX(0.9531);">ECM-</span></div>
<span style="position:absolute;left:269.20px;top:588.00px;font-family:'Liberation Sans', sans-serif;font-size:13px;line-height:1;color:#2a2a2a;font-weight:normal;white-space:nowrap;transform-origin:0 0;transform:scaleX(0.9000);">3</span>
<span style="position:absolute;left:373.28px;top:588.00px;font-family:'Liberation Sans', sans-serif;font-size:13px;line-height:1;color:#00838c;font-weight:normal;white-space:nowrap;transform-origin:0 0;transform:scaleX(0.9200);">114</span>
<span style="position:absolute;left:410.57px;top:588.00px;font-family:'Liberation Sans', sans-serif;font-size:13px;line-height:1;color:#00838c;font-weight:normal;white-space:nowrap;transform-origin:0 0;transform:scaleX(0.9344);">13.01.2020</span>
<span style="position:absolute;left:502.02px;top:588.00px;font-family:'Liberation Sans', sans-serif;font-size:13px;line-height:1;color:#2a2a2a;font-weight:normal;white-space:nowrap;transform-origin:0 0;transform:scaleX(0.9796);">Stored - Archived</span>
<span style="position:absolute;left:635.55px;top:588.00px;font-family:'Liberation Sans', sans-serif;font-size:13px;line-height:1;color:#2a2a2a;font-weight:normal;white-space:nowrap;transform-origin:0 0;transform:scaleX(0.9500);">Store</span>
<span style="position:absolute;left:875.78px;top:588.00px;font-family:'Liberation Sans', sans-serif;font-size:13px;line-height:1;color:#2a2a2a;font-weight:normal;white-space:nowrap;transform-origin:0 0;transform:scaleX(0.9171);">Sales Head...</span>
<span style="position:absolute;left:956.80px;top:588.00px;font-family:'Liberation Sans', sans-serif;font-size:13px;line-height:1;color:#00838c;font-weight:normal;white-space:nowrap;transform-origin:0 0;transform:scaleX(0.8863);">VERSION(1) SORTING(Field1,Fiel...</span>
<span style="position:absolute;left:1155.17px;top:588.00px;font-family:'Liberation Sans', sans-serif;font-size:13px;line-height:1;color:#2a2a2a;font-weight:normal;white-space:nowrap;transform-origin:0 0;transform:scaleX(0.9291);">EASYforDynamicsNav Vertical ...</span>
<span style="position:absolute;left:1343.01px;top:588.00px;font-family:'Liberation Sans', sans-serif;font-size:13px;line-height:1;color:#2a2a2a;font-weight:normal;white-space:nowrap;transform-origin:0 0;transform:scaleX(0.8875);">EXT-DATEI</span>
<div style='position:absolute;left:0;top:0;width:1465px;height:778px;overflow:hidden'><span style="position:absolute;left:1434.05px;top:588.00px;font-family:'Liberation Sans', sans-serif;font-size:13px;line-height:1;color:#2a2a2a;font-weight:normal;white-space:nowrap;transform-origin:0 0;transform:scaleX(0.9531);">ECM-</span></div>

<svg style='position:absolute;left:0;top:0' width='1580' height='778' viewBox='0 0 1580 778'><circle cx='1419.6' cy='23.8' r='4.7' fill='none' stroke='#fff' stroke-width='1.05'/><line x1='1422.9' y1='27.1' x2='1426.3' y2='30.4' stroke='#fff' stroke-width='1.2'/><path d='M1464.00 19.09 L1464.88 17.43 L1467.12 17.43 L1468.00 19.09 L1468.70 19.37 L1470.49 18.83 L1472.07 20.41 L1471.53 22.20 L1471.81 22.90 L1473.47 23.78 L1473.47 26.02 L1471.81 26.90 L1471.53 27.60 L1472.07 29.39 L1470.49 30.97 L1468.70 30.43 L1468.00 30.71 L1467.12 32.37 L1464.88 32.37 L1464.00 30.71 L1463.30 30.43 L1461.51 30.97 L1459.93 29.39 L1460.47 27.60 L1460.19 26.90 L1458.53 26.02 L1458.53 23.78 L1460.19 22.90 L1460.47 22.20 L1459.93 20.41 L1461.51 18.83 L1463.30 19.37 Z' fill='none' stroke='#fff' stroke-width='1.05' stroke-linejoin='round'/><circle cx='1466' cy='24.9' r='3.45' fill='none' stroke='#fff' stroke-width='1.05'/><line x1='139.6' y1='73.9' x2='152.6' y2='73.9' stroke='#93a6a9' stroke-width='1.2'/><path d='M145.5 68.1 L139.4 73.9 L145.5 79.9' fill='none' stroke='#3c4650' stroke-width='1.05'/><path d='M1235.2 73.3 L1239.05 76.9 L1248.3 68.2' fill='none' stroke='#5f6a78' stroke-width='1.1'/><path d='M1327.9 81.5 V68.4 H1335.1 V81.5 L1331.5 79.3 Z' fill='none' stroke='#2f96a0' stroke-width='1.05' stroke-linejoin='round'/><path d='M1361.6 71.6 H1354.6 Q1353.6 71.6 1353.6 72.6 V77.6 Q1353.6 78.6 1354.6 78.6 H1363.6 Q1364.6 78.6 1364.6 77.6 V75' fill='none' stroke='#2f96a0' stroke-width='1.15'/><line x1='1362.3' y1='73.8' x2='1365.4' y2='71.1' stroke='#2f96a0' stroke-width='1.1'/><circle cx='1365.6' cy='70.9' r='1.1' fill='#2f96a0'/><path d='M1395.7 68.2 L1390.5 73.4 M1390.4 70.1 V73.6 H1394.2' fill='none' stroke='#2f96a0' stroke-width='1.2'/><path d='M1382.2 81.6 L1387.6 76.5 M1384 76.4 H1387.8 V79.6' fill='none' stroke='#2f96a0' stroke-width='1.2'/><rect x='248.40' y='153' width='1' height='1' fill='#c5c9ce'/><rect x='255.60' y='153' width='1' height='1' fill='#c5c9ce'/><rect x='262.80' y='153' width='1' height='1' fill='#c5c9ce'/><rect x='270.00' y='153' width='1' height='1' fill='#c5c9ce'/><rect x='277.20' y='153' width='1' height='1' fill='#c5c9ce'/><rect x='284.40' y='153' width='1' height='1' fill='#c5c9ce'/><rect x='291.60' y='153' width='1' height='1' fill='#c5c9ce'/><rect x='298.80' y='153' width='1' height='1' fill='#c5c9ce'/><rect x='306.00' y='153' width='1' height='1' fill='#c5c9ce'/><rect x='313.20' y='153' width='1' height='1' fill='#c5c9ce'/><rect x='320.40' y='153' width='1' height='1' fill='#c5c9ce'/><rect x='327.60' y='153' width='1' height='1' fill='#c5c9ce'/><rect x='334.80' y='153' width='1' height='1' fill='#c5c9ce'/><rect x='342.00' y='153' width='1' height='1' fill='#c5c9ce'/><rect x='349.20' y='153' width='1' height='1' fill='#c5c9ce'/><rect x='356.40' y='153' width='1' height='1' fill='#c5c9ce'/><rect x='363.60' y='153' width='1' height='1' fill='#c5c9ce'/><rect x='370.80' y='153' width='1' height='1' fill='#c5c9ce'/><rect x='378.00' y='153' width='1' height='1' fill='#c5c9ce'/><rect x='385.20' y='153' width='1' height='1' fill='#c5c9ce'/><rect x='392.40' y='153' width='1' height='1' fill='#c5c9ce'/><rect x='399.60' y='153' width='1' height='1' fill='#c5c9ce'/><rect x='406.80' y='153' width='1' height='1' fill='#c5c9ce'/><rect x='414.00' y='153' width='1' height='1' fill='#c5c9ce'/><rect x='421.20' y='153' width='1' height='1' fill='#c5c9ce'/><rect x='240.40' y='187' width='1' height='1' fill='#c5c9ce'/><rect x='247.60' y='187' width='1' height='1' fill='#c5c9ce'/><rect x='254.80' y='187' width='1' height='1' fill='#c5c9ce'/><rect x='262.00' y='187' width='1' height='1' fill='#c5c9ce'/><rect x='269.20' y='187' width='1' height='1' fill='#c5c9ce'/><rect x='276.40' y='187' width='1' height='1' fill='#c5c9ce'/><rect x='283.60' y='187' width='1' height='1' fill='#c5c9ce'/><rect x='290.80' y='187' width='1' height='1' fill='#c5c9ce'/><rect x='298.00' y='187' width='1' height='1' fill='#c5c9ce'/><rect x='305.20' y='187' width='1' height='1' fill='#c5c9ce'/><rect x='312.40' y='187' width='1' height='1' fill='#c5c9ce'/><rect x='319.60' y='187' width='1' height='1' fill='#c5c9ce'/><rect x='326.80' y='187' width='1' height='1' fill='#c5c9ce'/><rect x='334.00' y='187' width='1' height='1' fill='#c5c9ce'/><rect x='341.20' y='187' width='1' height='1' fill='#c5c9ce'/><rect x='348.40' y='187' width='1' height='1' fill='#c5c9ce'/><rect x='355.60' y='187' width='1' height='1' fill='#c5c9ce'/><rect x='362.80' y='187' width='1' height='1' fill='#c5c9ce'/><rect x='370.00' y='187' width='1' height='1' fill='#c5c9ce'/><rect x='377.20' y='187' width='1' height='1' fill='#c5c9ce'/><rect x='384.40' y='187' width='1' height='1' fill='#c5c9ce'/><rect x='391.60' y='187' width='1' height='1' fill='#c5c9ce'/><rect x='398.80' y='187' width='1' height='1' fill='#c5c9ce'/><rect x='406.00' y='187' width='1' height='1' fill='#c5c9ce'/><rect x='413.20' y='187' width='1' height='1' fill='#c5c9ce'/><rect x='420.40' y='187' width='1' height='1' fill='#c5c9ce'/><path d='M760.1 149.1 H765.9 L763 154.3 Z' fill='#111'/><path d='M760.1 183.1 H765.9 L763 188.3 Z' fill='#111'/><rect x='922.90' y='153' width='1' height='1' fill='#c5c9ce'/><rect x='930.10' y='153' width='1' height='1' fill='#c5c9ce'/><rect x='937.30' y='153' width='1' height='1' fill='#c5c9ce'/><rect x='944.50' y='153' width='1' height='1' fill='#c5c9ce'/><rect x='951.70' y='153' width='1' height='1' fill='#c5c9ce'/><rect x='958.90' y='153' width='1' height='1' fill='#c5c9ce'/><rect x='966.10' y='153' width='1' height='1' fill='#c5c9ce'/><rect x='973.30' y='153' width='1' height='1' fill='#c5c9ce'/><rect x='980.50' y='153' width='1' height='1' fill='#c5c9ce'/><rect x='987.70' y='153' width='1' height='1' fill='#c5c9ce'/><rect x='994.90' y='153' width='1' height='1' fill='#c5c9ce'/><rect x='1002.10' y='153' width='1' height='1' fill='#c5c9ce'/><rect x='1009.30' y='153' width='1' height='1' fill='#c5c9ce'/><rect x='1016.50' y='153' width='1' height='1' fill='#c5c9ce'/><rect x='1023.70' y='153' width='1' height='1' fill='#c5c9ce'/><rect x='1030.90' y='153' width='1' height='1' fill='#c5c9ce'/><rect x='1038.10' y='153' width='1' height='1' fill='#c5c9ce'/><rect x='1045.30' y='153' width='1' height='1' fill='#c5c9ce'/><rect x='1052.50' y='153' width='1' height='1' fill='#c5c9ce'/><path d='M1382.6 227.9 H1395.5 L1390.2 233.4 V237.9 H1387.8 V233.4 Z' fill='none' stroke='#1f8c95' stroke-width='1.1' stroke-linejoin='round'/><rect x='269' y='299' width='2' height='6' fill='#b3b6ba'/><path d='M267.9 304.5 L272.1 304.5 L270 307.9 Z' fill='#5c5f63' stroke='#5c5f63' stroke-width='0.6' stroke-linejoin='round'/><line x1='140.2' y1='329.1' x2='150.6' y2='329.1' stroke='#5d6b6e' stroke-width='1.15'/><path d='M146.9 324.6 L151.2 329.1 L146.9 333.5' fill='none' stroke='#4a5558' stroke-width='1.1'/><rect x='301' y='324.45' width='2' height='2' fill='#4a4a4a'/><rect x='301' y='329.5' width='2' height='2' fill='#4a4a4a'/><rect x='301' y='334.9' width='2' height='2' fill='#4a4a4a'/></svg>
</div>
</body></html>
